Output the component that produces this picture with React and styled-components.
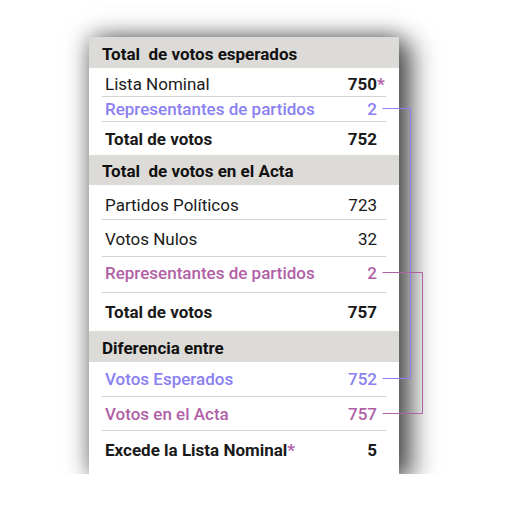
import styled, { createGlobalStyle } from "styled-components"

const BLUE = "#8a80f2"
const PINK = "#b15fa6"

const GlobalStyle = createGlobalStyle`
body {
  margin:0;
  background:#fff;
  font-family:Roboto, "Liberation Sans", sans-serif;
}
`

const sections = [
    {
        title: "Total  de votos esperados",
        rows: [
            { label: "Lista Nominal", value: "750", h: 29, shift: 3, star: true, valueWeight: 700 },
            { label: "Representantes de partidos", value: "2", h: 25, color: BLUE, weight: 500, valueWeight: 500 },
            { label: "Total de votos", value: "752", h: 33, weight: 700, valueWeight: 700 },
        ],
    },
    {
        title: "Total  de votos en el Acta",
        rows: [
            { label: "Partidos Políticos", value: "723", h: 35, shift: 5 },
            { label: "Votos Nulos", value: "32", h: 37, shift: 1 },
            { label: "Representantes de partidos", value: "2", h: 36, shift: -3, color: PINK, weight: 500, valueWeight: 500 },
            { label: "Total de votos", value: "757", h: 38, weight: 700, valueWeight: 700 },
        ],
    },
    {
        title: "Diferencia entre",
        rows: [
            { label: "Votos Esperados", value: "752", h: 35, color: BLUE, weight: 500, valueWeight: 500 },
            { label: "Votos en el Acta", value: "757", h: 34, color: PINK, weight: 500, valueWeight: 500 },
            { label: "Excede la Lista Nominal", labelStar: true, value: "5", h: 43, shift: -5, weight: 700, valueWeight: 700 },
        ],
    },
]

export default function App() {
    return (
        <>
            <GlobalStyle />
            <Page>
                <Wrap>
                    <Card>
                        {sections.map((s, i) => (
                            <Section key={i}>
                                <Header h={i === 1 ? 30 : 31}>{s.title}</Header>
                                <Rows>
                                    {s.rows.map((r, j) => (
                                        <Row key={j} h={r.h} shift={r.shift || 0} last={j === s.rows.length - 1}>
                                            <Label color={r.color} weight={r.weight}>
                                                {r.label}
                                                {r.labelStar && <Star>*</Star>}
                                            </Label>
                                            <Value color={r.color} weight={r.valueWeight}>
                                                {r.value}
                                                {r.star && <StarAfter>*</StarAfter>}
                                            </Value>
                                        </Row>
                                    ))}
                                </Rows>
                            </Section>
                        ))}
                    </Card>
                    <Links width="345" height="400" viewBox="0 0 345 400">
                        <polyline points="293.5,71.5 321.5,71.5 321.5,341.5 293.5,341.5" fill="none" stroke={BLUE} strokeWidth="1" />
                        <polyline points="293.5,235.5 333.5,235.5 333.5,376.5 293.5,376.5" fill="none" stroke={PINK} strokeWidth="1" />
                    </Links>
                </Wrap>
            </Page>
        </>
    )
}

const Page = styled.div`
padding:37px 0 0 89px;
`

const Wrap = styled.div`
position:relative;
width:310px;
`

const Card = styled.div`
width:310px;
background:#fff;
box-shadow:0 0 22px rgba(0,0,0,0.5), 14px 6px 24px rgba(0,0,0,0.55);
`

const Section = styled.div`
display:flex;
flex-direction:column;
`

const Header = styled.div`
height:${p => p.h}px;
box-sizing:border-box;
background:#dcdbd7;
display:flex;
align-items:center;
padding:2px 0 0 13px;
font-size:17px;
font-weight:700;
color:#111;
white-space:pre;
`

const Rows = styled.div`
padding:0 13px;
`

const Row = styled.div`
height:${p => p.h}px;
box-sizing:border-box;
display:flex;
align-items:center;
justify-content:space-between;
padding:${p => p.shift > 0 ? p.shift : 0}px 9px ${p => p.shift < 0 ? -p.shift : 0}px 3px;
border-bottom:${p => p.last ? "none" : "1px solid #d3d3d3"};
font-size:17px;
`

const Label = styled.div`
color:${p => p.color || "#1a1a1a"};
font-weight:${p => p.weight || 400};
`

const Value = styled.div`
position:relative;
color:${p => p.color || "#1a1a1a"};
font-weight:${p => p.weight || 400};
`

const Star = styled.span`
color:${PINK};
`

const StarAfter = styled.span`
position:absolute;
left:100%;
top:0;
color:${PINK};
`

const Links = styled.svg`
position:absolute;
left:0;
top:0;
pointer-events:none;
`
